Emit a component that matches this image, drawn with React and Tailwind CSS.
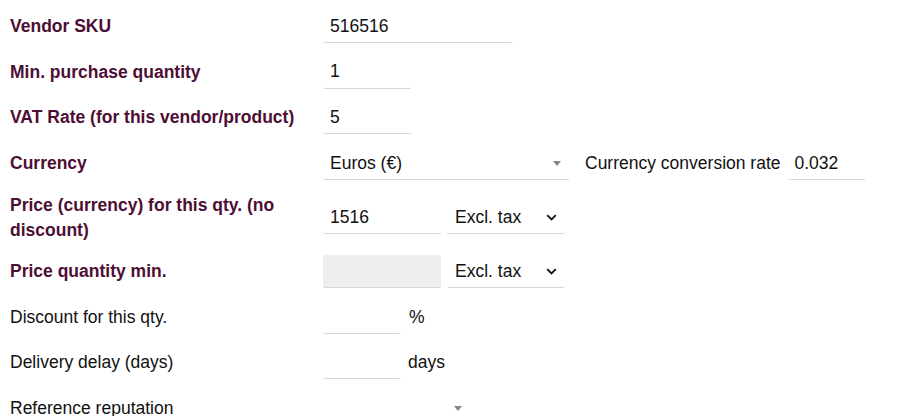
import React from 'react';

const Chevron = () => (
  <svg width="11" height="7" viewBox="0 0 11 7" className="shrink-0">
    <path d="M1.2 1.2 L5.5 5.4 L9.8 1.2" fill="none" stroke="#111" strokeWidth="1.8" />
  </svg>
);

const Triangle = () => (
  <span className="w-0 h-0 border-l-[4px] border-r-[4px] border-t-[5px] border-l-transparent border-r-transparent border-t-[#888] shrink-0" />
);

const TextInput = ({ value, width, disabled }) => (
  <div
    className={`h-[33px] ${width} flex items-center pl-[7px] border-b border-[#d6d6d6] rounded-[3px] text-[#111] ${disabled ? 'bg-[#eeeeee]' : 'bg-white'}`}
  >
    {value}
  </div>
);

const Select2 = ({ value, width }) => (
  <div className={`h-[33px] ${width} flex items-center justify-between pl-[7px] pr-[9px] border-b border-[#d6d6d6] rounded-[3px] text-[#111]`}>
    <span>{value}</span>
    <Triangle />
  </div>
);

const NativeSelect = ({ value }) => (
  <div className="h-[33px] w-[118px] flex items-center justify-between pl-[8px] pr-[8px] border-b border-[#d6d6d6] rounded-[3px] text-[#111]">
    <span>{value}</span>
    <Chevron />
  </div>
);

const Row = ({ label, required, children }) => (
  <div className="flex items-center py-[6.3px]">
    <div className={`w-[313px] shrink-0 pr-[5px] leading-[25px] ${required ? 'font-bold text-[#4d0e34]' : 'text-[#111]'}`}>
      {label}
    </div>
    <div className="flex items-center leading-[25px]">{children}</div>
  </div>
);

export default function App() {
  return (
    <div
      className="w-[918px] h-[416px] overflow-hidden bg-white pl-[10px] pt-[4px] text-[17.5px]"
      style={{ fontFamily: '"Liberation Sans", Arial, sans-serif' }}
    >
      <Row label="Vendor SKU" required>
        <TextInput value="516516" width="w-[190px]" />
      </Row>
      <Row label="Min. purchase quantity" required>
        <TextInput value="1" width="w-[89px]" />
      </Row>
      <Row label="VAT Rate (for this vendor/product)" required>
        <TextInput value="5" width="w-[89px]" />
      </Row>
      <Row label="Currency" required>
        <Select2 value="Euros (€)" width="w-[247px]" />
        <span className="ml-[15px] mr-[7px] text-[#111]">Currency conversion rate</span>
        <TextInput value="0.032" width="w-[78px]" />
      </Row>
      <Row label="Price (currency) for this qty. (no discount)" required>
        <TextInput value="1516" width="w-[118px]" />
        <div className="ml-[6px]">
          <NativeSelect value="Excl. tax" />
        </div>
      </Row>
      <Row label="Price quantity min." required>
        <TextInput value="" width="w-[118px]" disabled />
        <div className="ml-[6px]">
          <NativeSelect value="Excl. tax" />
        </div>
      </Row>
      <Row label="Discount for this qty.">
        <TextInput value="" width="w-[78px]" />
        <span className="ml-[8px] text-[#111]">%</span>
      </Row>
      <Row label="Delivery delay (days)">
        <TextInput value="" width="w-[78px]" />
        <span className="ml-[7px] text-[#111]">days</span>
      </Row>
      <Row label="Reference reputation">
        <div className="h-[33px] w-[148px] flex items-center justify-end pr-[9px]">
          <Triangle />
        </div>
      </Row>
    </div>
  );
}
